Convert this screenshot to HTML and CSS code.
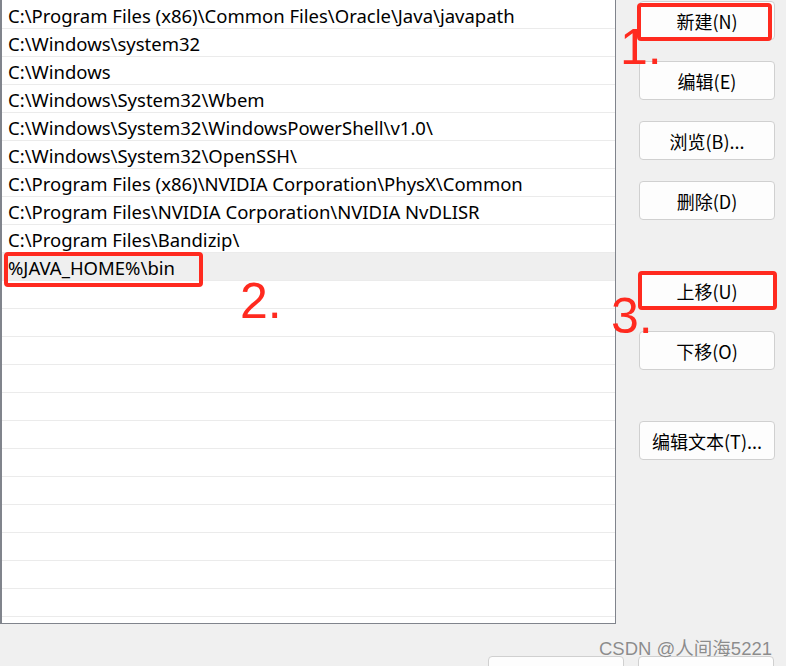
FILE: index.html
```html
<!DOCTYPE html>
<html lang="zh-CN">
<head>
    <meta charset="UTF-8">
    <title>编辑环境变量</title>
    <link rel="stylesheet" href="styles.css">
</head>
<body>
    <div class="dialog">
        <div class="main">
            <div class="path-list">
                <div class="row">C:\Program Files (x86)\Common Files\Oracle\Java\javapath</div>
                <div class="row">C:\Windows\system32</div>
                <div class="row">C:\Windows</div>
                <div class="row">C:\Windows\System32\Wbem</div>
                <div class="row">C:\Windows\System32\WindowsPowerShell\v1.0\</div>
                <div class="row">C:\Windows\System32\OpenSSH\</div>
                <div class="row">C:\Program Files (x86)\NVIDIA Corporation\PhysX\Common</div>
                <div class="row">C:\Program Files\NVIDIA Corporation\NVIDIA NvDLISR</div>
                <div class="row">C:\Program Files\Bandizip\</div>
                <div class="row selected">%JAVA_HOME%\bin</div>
                <div class="row"></div>
                <div class="row"></div>
                <div class="row"></div>
                <div class="row"></div>
                <div class="row"></div>
                <div class="row"></div>
                <div class="row"></div>
                <div class="row"></div>
                <div class="row"></div>
                <div class="row"></div>
                <div class="row"></div>
                <div class="row"></div>
            </div>

            <div class="actions">
                <button class="btn">新建(N)</button>
                <button class="btn">编辑(E)</button>
                <button class="btn">浏览(B)...</button>
                <button class="btn">删除(D)</button>
                <button class="btn group-start">上移(U)</button>
                <button class="btn">下移(O)</button>
                <button class="btn group-start">编辑文本(T)...</button>
            </div>
        </div>

        <!-- 确定 / 取消，只露出顶部 -->
        <div class="footer">
            <button class="btn"></button>
            <button class="btn"></button>
        </div>
    </div>

    <!-- 标注 -->
    <div class="mark box-1"></div>
    <div class="mark box-2"></div>
    <div class="mark box-3"></div>
    <div class="step step-1">1.</div>
    <div class="step step-2">2.</div>
    <div class="step step-3">3.</div>

    <div class="watermark">CSDN @人间海5221</div>
</body>
</html>
```

FILE: styles.css
```css
:root {
    --bg-color: #f0f0f0;
    --mark-red: #ff2a1f;
    --line-color: #ebebeb;
}

body {
    margin: 0;
    height: 666px;
    overflow: hidden;
    background: var(--bg-color);
    font-family: "Noto Sans", "Noto Sans CJK SC", sans-serif;
    position: relative;
}

.dialog {
    display: flex;
    flex-direction: column;
}

.main {
    display: flex;
    align-items: flex-start;
}

.path-list {
    width: 613px;
    height: 622px;
    padding-top: 1px;
    background: white;
    border-left: 2px solid #80848c;
    border-right: 1px solid #80848c;
    border-bottom: 1px solid #80848c;
    overflow: hidden;
    box-sizing: content-box;
}

.row {
    height: 27px;
    line-height: 29px;
    padding-left: 6px;
    border-bottom: 1px solid var(--line-color);
    font-size: 18.5px;
    color: #000;
    white-space: nowrap;
}

.row.selected {
    background: #efefef;
}

.actions {
    display: flex;
    flex-direction: column;
    gap: 21px;
    margin-left: 23px;
    padding-top: 1px;
}

.btn {
    width: 136px;
    height: 39px;
    padding: 0;
    background: #fdfdfd;
    border: 1px solid #d0d0d0;
    border-radius: 4px;
    font-family: "Noto Sans CJK SC", sans-serif;
    font-size: 18px;
    color: #000;
}

.actions .group-start {
    margin-top: 30px;
}

.footer {
    display: flex;
    justify-content: flex-end;
    gap: 14px;
    margin-top: 32px;
    padding-right: 12px;
}

.mark {
    position: absolute;
    border: 4px solid var(--mark-red);
    border-radius: 4px;
    box-sizing: border-box;
}

.box-1 { left: 637px; top: 3px; width: 135px; height: 38px; }
.box-2 { left: 4px; top: 252px; width: 199px; height: 35px; }
.box-3 { left: 638px; top: 271px; width: 139px; height: 39px; }

.step {
    position: absolute;
    font-family: "Liberation Sans", sans-serif;
    font-size: 50px;
    line-height: 50px;
    color: var(--mark-red);
}

.step-1 { left: 620px; top: 22px; }
.step-2 { left: 240px; top: 276px; }
.step-3 { left: 611px; top: 291px; }

.watermark {
    position: absolute;
    left: 599px;
    top: 634px;
    font-family: "Liberation Sans", "Noto Sans CJK SC", sans-serif;
    font-size: 18.5px;
    color: #8c8c8c;
    text-shadow: 0 0 1px #fff;
}
```
